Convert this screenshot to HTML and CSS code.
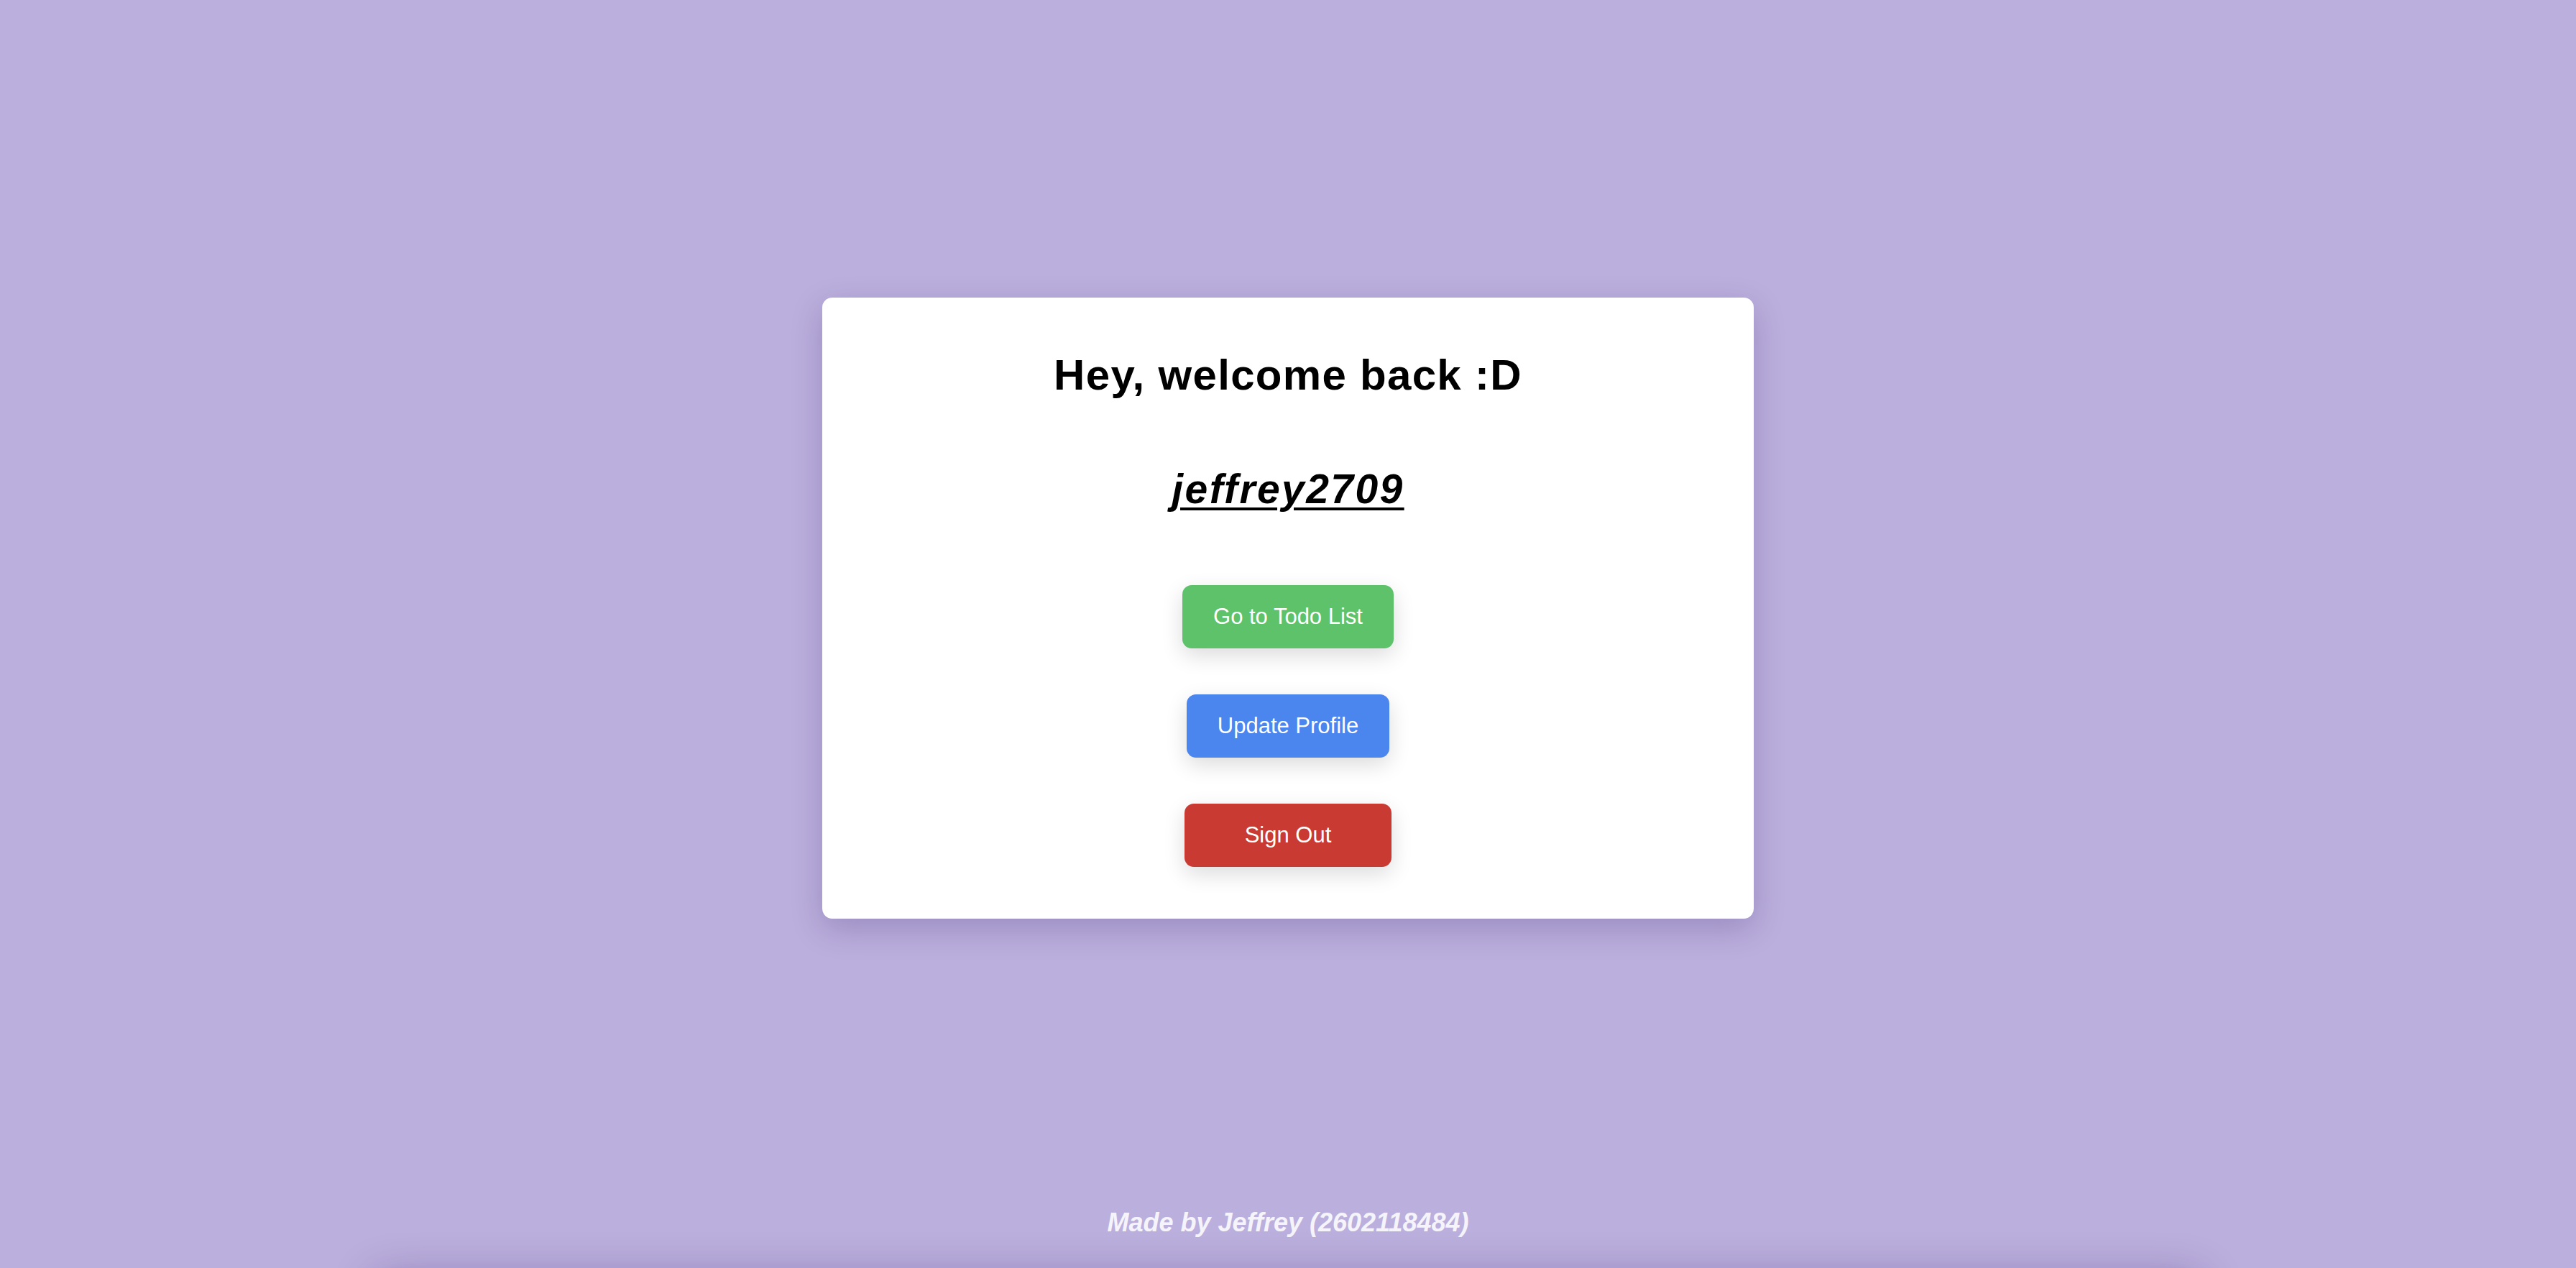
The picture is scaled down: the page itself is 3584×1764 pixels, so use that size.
FILE: index.html
```html
<!DOCTYPE html>
<html lang="en">
<head>
<meta charset="utf-8">
<title>Welcome back</title>
<link rel="stylesheet" href="styles.css">
</head>
<body>
<div class="page">
  <main class="card">
    <h1 class="title">Hey, welcome back :D</h1>
    <h2 class="username">jeffrey2709</h2>
    <div class="actions">
      <button class="btn btn-green">Go to Todo List</button>
      <button class="btn btn-blue">Update Profile</button>
      <button class="btn btn-red">Sign Out</button>
    </div>
  </main>
  <footer class="footer">Made by Jeffrey (2602118484)</footer>
  <div class="footer-bar"></div>
</div>
</body>
</html>
```

FILE: styles.css
```css
html, body {
  margin: 0;
  padding: 0;
  height: 100%;
  overflow: hidden;
}

body {
  background: #bbafdd;
  font-family: "Liberation Sans", Arial, Helvetica, sans-serif;
}

.page {
  display: flex;
  flex-direction: column;
  align-items: center;
  padding-top: 414px;
}

.card {
  width: 1296px;
  box-sizing: border-box;
  background: #ffffff;
  border-radius: 14px;
  box-shadow: 0 14px 44px rgba(40, 20, 90, 0.22);
  padding: 74px 0 72px;
  display: flex;
  flex-direction: column;
  align-items: center;
}

.title {
  margin: 0;
  font-size: 60px;
  font-weight: 700;
  letter-spacing: 1.3px;
  line-height: 67px;
  color: #000;
}

.username {
  margin: 96px 0 0;
  font-size: 57px;
  font-weight: 700;
  font-style: italic;
  letter-spacing: 2.4px;
  line-height: 58px;
  text-decoration: underline;
  text-decoration-thickness: 4px;
  text-underline-offset: 6px;
  color: #000;
}

.actions {
  margin-top: 105px;
  display: flex;
  flex-direction: column;
  align-items: center;
  gap: 64px;
}

.btn {
  height: 88px;
  border: none;
  border-radius: 13px;
  color: #ffffff;
  font-family: "Liberation Sans", Arial, Helvetica, sans-serif;
  font-size: 31px;
  padding: 0;
  box-shadow: 0 10px 30px rgba(0, 0, 0, 0.14);
  cursor: pointer;
}

.btn-green {
  width: 294px;
  background: #5ec26b;
}

.btn-blue {
  width: 282px;
  background: #4b85ee;
}

.btn-red {
  width: 288px;
  background: #c93a32;
}

.footer {
  margin-top: 402px;
  font-size: 36px;
  font-weight: 700;
  font-style: italic;
  line-height: 41px;
  color: #f6f4fb;
}

.footer-bar {
  margin-top: 56px;
  width: 2540px;
  height: 120px;
  background: #b5a9d6;
  box-shadow: 0 0 60px rgba(40, 20, 90, 0.32);
}
```
